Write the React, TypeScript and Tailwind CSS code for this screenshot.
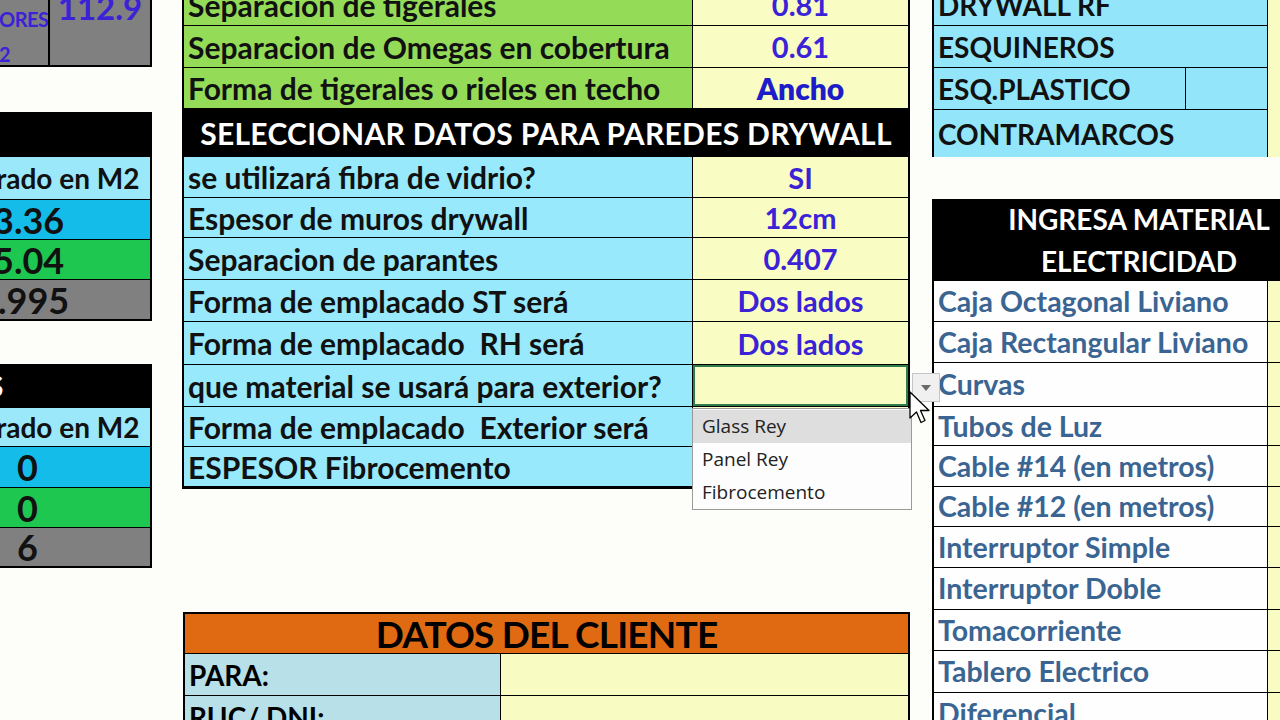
import React from 'react';

const font = "font-['Lato','Liberation_Sans',sans-serif] font-bold";

type Row = { label: string; value?: string; h: string; strong?: boolean; selected?: boolean };

const techoRows: Row[] = [
  { label: 'Separacion de tigerales', value: '0.81', h: 'h-[42px]' },
  { label: 'Separacion de Omegas en cobertura', value: '0.61', h: 'h-[42px]' },
  { label: 'Forma de tigerales o rieles en techo', value: 'Ancho', h: 'h-[41px]', strong: true },
];

const paredRows: Row[] = [
  { label: 'se utilizará fibra de vidrio?', value: 'SI', h: 'h-[41px]' },
  { label: 'Espesor de muros drywall', value: '12cm', h: 'h-[40px]' },
  { label: 'Separacion de parantes', value: '0.407', h: 'h-[42px]' },
  { label: 'Forma de emplacado ST será', value: 'Dos lados', h: 'h-[42px]' },
  { label: 'Forma de emplacado\u00a0 RH será', value: 'Dos lados', h: 'h-[43px]' },
  { label: 'que material se usará para exterior?', value: '', h: 'h-[42px]', selected: true },
  { label: 'Forma de emplacado\u00a0 Exterior será', value: '', h: 'h-[40px]' },
  { label: 'ESPESOR Fibrocemento', value: '', h: 'h-[40px]' },
];

const electricidad = [
  { label: 'Caja Octagonal Liviano', h: 'h-[41px]' },
  { label: 'Caja Rectangular Liviano', h: 'h-[41px]' },
  { label: 'Curvas', h: 'h-[44px]' },
  { label: 'Tubos de Luz', h: 'h-[39px]' },
  { label: 'Cable #14 (en metros)', h: 'h-[41px]' },
  { label: 'Cable #12 (en metros)', h: 'h-[40px]' },
  { label: 'Interruptor Simple', h: 'h-[41px]' },
  { label: 'Interruptor Doble', h: 'h-[42px]' },
  { label: 'Tomacorriente', h: 'h-[41px]' },
  { label: 'Tablero Electrico', h: 'h-[42px]' },
  { label: 'Diferencial', h: 'h-[42px]' },
];

function DataRow({ row, labelBg }: { row: Row; labelBg: string }) {
  return (
    <div className={`flex ${row.h} border-b border-black`}>
      <div className={`w-[508px] flex items-center pl-[4px] text-[30px] leading-none text-[#111] whitespace-nowrap ${labelBg}`}>
        {row.label}
      </div>
      <div
        className={`flex-1 flex items-center justify-center border-l border-black bg-[#f9fcc3] leading-none ${
          row.selected ? 'ring-2 ring-inset ring-[#2f7d4a]' : ''
        } ${row.strong ? 'text-[30px] text-[#1c1cc8] font-extrabold' : 'text-[29px] text-[#3b22d6]'}`}
      >
        {row.value}
      </div>
    </div>
  );
}

function LeftColumn() {
  return (
    <div className="w-[152px] shrink-0 text-[#111] leading-none">
      <div className="flex h-[83px] bg-[#808080] border-r-2 border-b-2 border-black">
        <div className="w-[50px] border-r-2 border-black overflow-hidden text-[20px] leading-[35px] text-[#3b22d6] pt-[18px]">
          <div className="-ml-[1px] tracking-[-0.5px]">ORES</div>
          <div className="-ml-[1px]">2</div>
        </div>
        <div className="flex-1 text-center text-[33px] leading-[36px] text-[#3b22d6] pt-[5px]">112.9</div>
      </div>

      <div className="mt-[45px] border-r-2 border-b-2 border-black">
        <div className="h-[45px] bg-black border-b border-black" />
        <div className="h-[43px] bg-[#9ae8fa] border-b border-black flex items-center text-[28px] overflow-hidden">
          <span className="-ml-[4px] whitespace-nowrap">rado en M2</span>
        </div>
        <div className="h-[40px] bg-[#14bde9] border-b border-black flex items-center text-[36px] overflow-hidden">
          <span className="-ml-[7px]">3.36</span>
        </div>
        <div className="h-[40px] bg-[#1ec74f] border-b border-black flex items-center text-[36px] overflow-hidden">
          <span className="-ml-[7px]">5.04</span>
        </div>
        <div className="h-[39px] bg-[#808080] flex items-center text-[36px] overflow-hidden">
          <span className="-ml-[2px]">.995</span>
        </div>
      </div>

      <div className="mt-[43px] border-r-2 border-b-2 border-black">
        <div className="h-[44px] bg-black border-b border-black flex items-center overflow-hidden text-[28px] text-white">
          <span className="-ml-[12px]">S</span>
        </div>
        <div className="h-[39px] bg-[#9ae8fa] border-b border-black flex items-center text-[28px] overflow-hidden">
          <span className="-ml-[4px] whitespace-nowrap">rado en M2</span>
        </div>
        <div className="h-[41px] bg-[#14bde9] border-b border-black flex items-center text-[36px] pl-[17px]">0</div>
        <div className="h-[40px] bg-[#1ec74f] border-b border-black flex items-center text-[36px] pl-[17px]">0</div>
        <div className="h-[38px] bg-[#808080] flex items-center text-[36px] pl-[17px]">6</div>
      </div>
    </div>
  );
}

function CenterColumn() {
  return (
    <div className="w-[728px] shrink-0">
      <div className="border-x-2 border-b-2 border-black">
        {techoRows.map((r) => (
          <DataRow key={r.label} row={r} labelBg="bg-[#94dc58]" />
        ))}
        <div className="h-[48px] bg-black border-b border-black flex items-center justify-center text-[30px] leading-none text-white tracking-[0.3px]">
          SELECCIONAR DATOS PARA PAREDES DRYWALL
        </div>
        {paredRows.map((r) => (
          <DataRow key={r.label} row={r} labelBg="bg-[#97e9fb]" />
        ))}
      </div>

      <div className="mt-[123px] ml-[1px] border-2 border-black">
        <div className="h-[40px] bg-[#e06a12] border-b border-black flex items-center justify-center text-[37px] leading-none text-black tracking-[-0.8px]">
          DATOS DEL CLIENTE
        </div>
        <div className="flex h-[42px] border-b border-black">
          <div className="w-[315px] bg-[#b7e0e9] flex items-center pl-[4px] text-[28px] text-black">PARA:</div>
          <div className="flex-1 border-l border-black bg-[#f8fcc2]" />
        </div>
        <div className="flex h-[42px]">
          <div className="w-[315px] bg-[#b7e0e9] flex items-center pl-[4px] text-[28px] text-black">RUC/ DNI:</div>
          <div className="flex-1 border-l border-black bg-[#f8fcc2]" />
        </div>
      </div>
    </div>
  );
}

function RightColumn() {
  return (
    <div className="w-[412px] shrink-0 text-[#111]">
      <div className="flex">
        <div className="w-[336px] border-l-2 border-r border-black bg-[#93e6f9] text-[28px]">
          <div className="h-[42px] border-b border-black flex items-center pl-[4px]">DRYWALL RF</div>
          <div className="h-[42px] border-b border-black flex items-center pl-[4px]">ESQUINEROS</div>
          <div className="h-[42px] border-b border-black flex">
            <div className="w-[252px] border-r border-black flex items-center pl-[4px]">ESQ.PLASTICO</div>
            <div className="flex-1" />
          </div>
          <div className="h-[47px] flex items-center pl-[4px]">CONTRAMARCOS</div>
        </div>
        <div className="flex-1 bg-[#f8fcc2]" />
      </div>

      <div className="mt-[42px]">
        <div className="h-[82px] bg-black border-l-2 border-black flex flex-col items-center justify-center text-[28px] leading-[42px] text-white">
          <div>INGRESA MATERIAL</div>
          <div>ELECTRICIDAD</div>
        </div>
        {electricidad.map((e) => (
          <div key={e.label} className={`flex ${e.h}`}>
            <div className="w-[336px] border-l-2 border-r border-b border-black bg-[#fefefe] flex items-center pl-[4px] text-[28.5px] leading-none text-[#3a6592] whitespace-nowrap">
              {e.label}
            </div>
            <div className="flex-1 bg-[#f8fcc2] border-b border-black" />
          </div>
        ))}
      </div>
    </div>
  );
}

function Dropdown() {
  const items = ['Glass Rey', 'Panel Rey', 'Fibrocemento'];
  return (
    <>
      <div className="absolute left-[912px] top-[373px] w-[28px] h-[29px] bg-[#f0f0f0] border border-[#c6c6c6] flex items-center justify-center">
        <svg width="10" height="6" viewBox="0 0 10 6">
          <path d="M0 0 L10 0 L5 6 Z" fill="#6a6a6a" />
        </svg>
      </div>
      <div className="absolute left-[692px] top-[408px] w-[220px] h-[102px] bg-[#fdfdfd] border border-[#9a9a9a] pt-[1px] font-['Open_Sans','Noto_Sans',sans-serif] font-normal text-[19px] text-[#222]">
        {items.map((it, i) => (
          <div
            key={it}
            className={`h-[33px] flex items-center pl-[9px] ${i === 0 ? 'bg-[#dedede]' : ''}`}
          >
            {it}
          </div>
        ))}
      </div>
      <svg className="absolute left-[909px] top-[391px]" width="22" height="34" viewBox="0 0 22 34">
        <path
          d="M1 1 L1 27 L7.5 21 L12 31.5 L16 29.5 L11.5 19.5 L20 19.5 Z"
          fill="#ffffff"
          stroke="#000000"
          strokeWidth="1.3"
          strokeLinejoin="round"
        />
      </svg>
    </>
  );
}

export default function App() {
  return (
    <div className={`relative w-[1280px] h-[720px] overflow-hidden bg-[#fdfdf9] ${font}`}>
      <div className="flex items-start -mt-4">
        <LeftColumn />
        <div className="w-[30px] shrink-0" />
        <CenterColumn />
        <div className="w-[22px] shrink-0" />
        <RightColumn />
      </div>
      <Dropdown />
    </div>
  );
}
